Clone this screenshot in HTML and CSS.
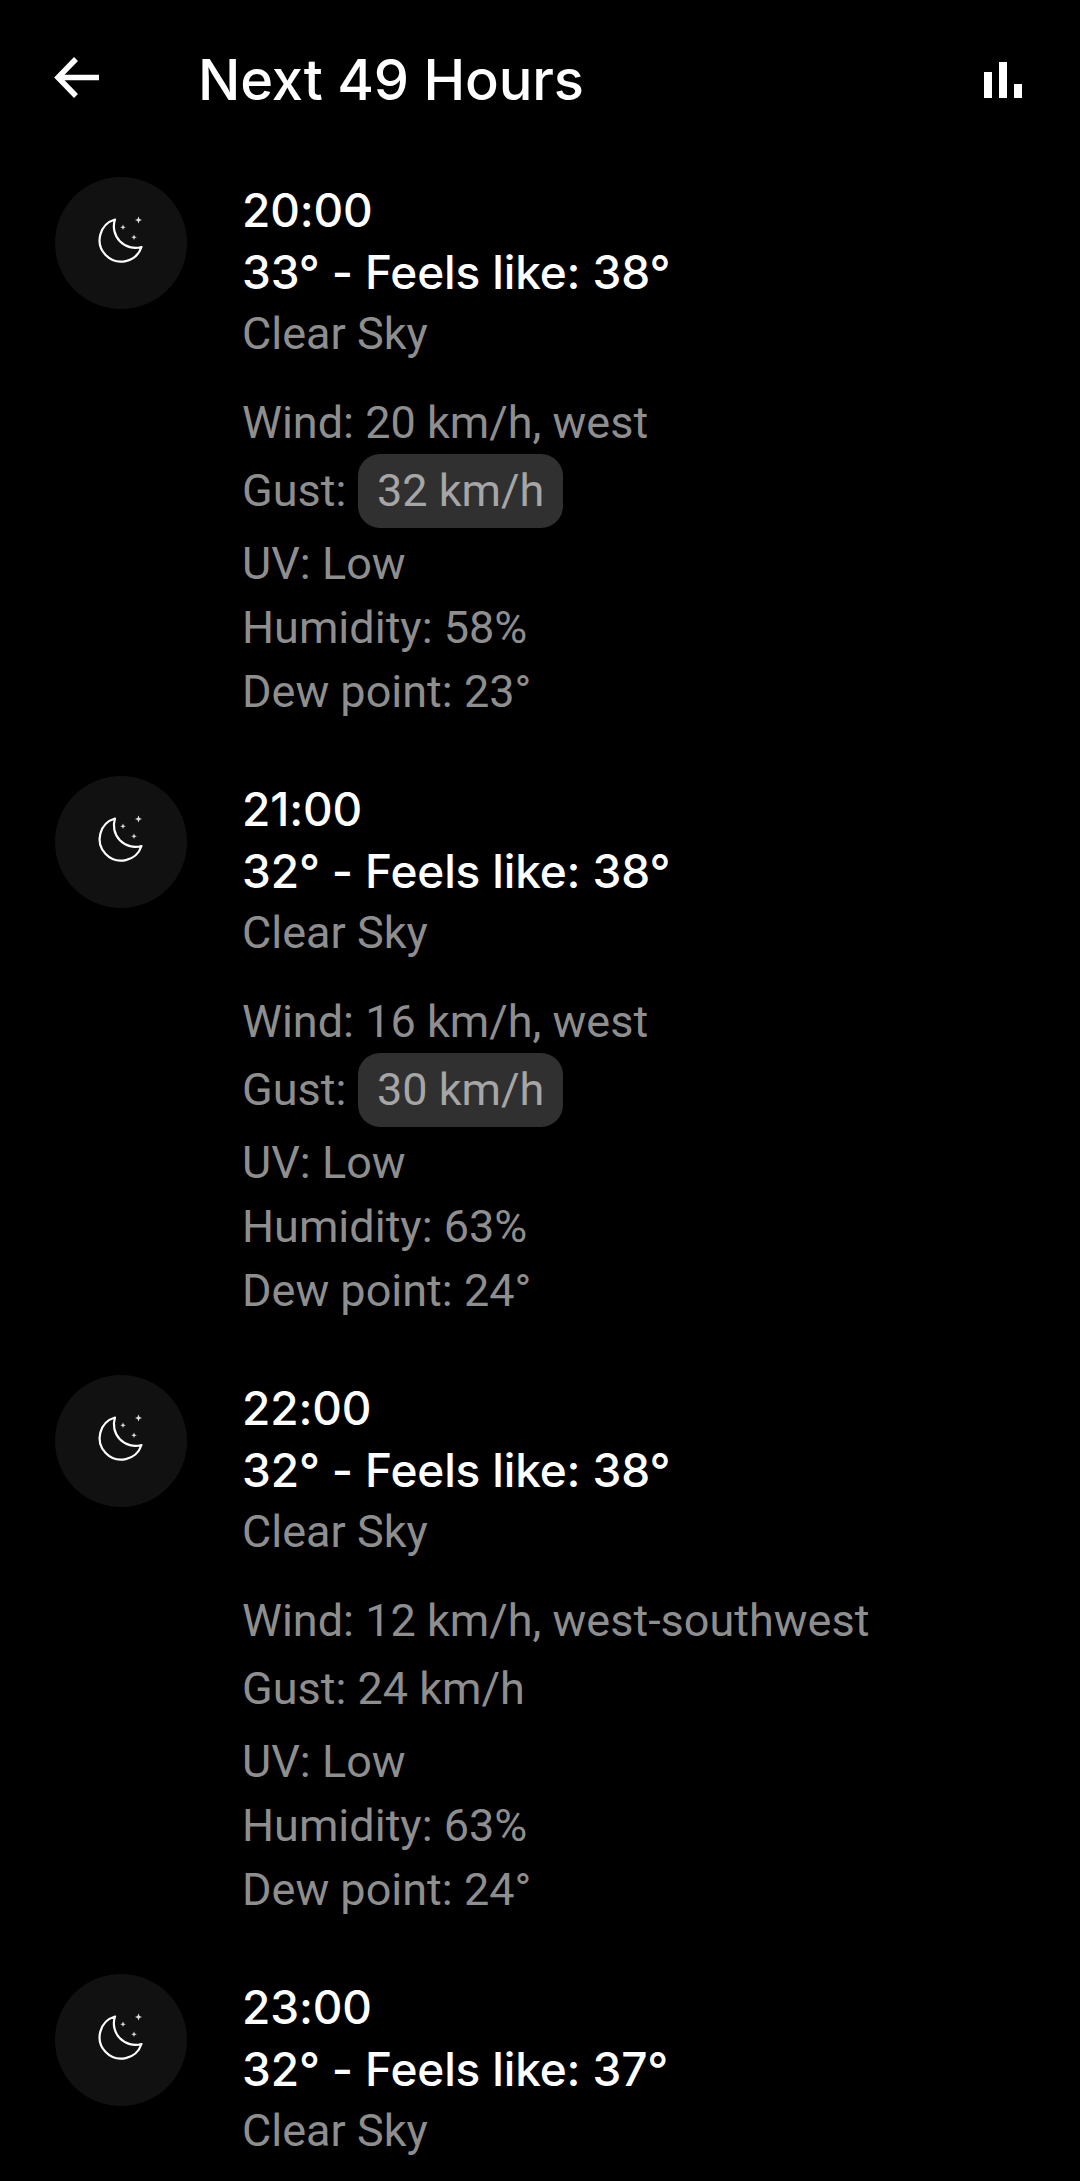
FILE: index.html
```html
<!DOCTYPE html>
<html lang="en">
<head>
    <meta charset="UTF-8">
    <meta name="viewport" content="width=device-width, initial-scale=1.0">
    <title>Next 49 Hours</title>
    <link rel="stylesheet" href="styles.css">
</head>
<body>
    <!-- Top bar -->
    <header class="top-bar">
        <svg class="back-icon" viewBox="0 0 56 52" aria-hidden="true">
            <path d="M49 23.500H9M26 5 8 23.500 26 42"/>
        </svg>
        <h1 class="title">Next 49 Hours</h1>
        <svg class="chart-icon" viewBox="0 0 38 36" aria-hidden="true">
            <rect x="0" y="10" width="8" height="26"/>
            <rect x="15" y="0" width="8" height="36"/>
            <rect x="30" y="22" width="8" height="14"/>
        </svg>
    </header>

    <!-- Hourly list -->
    <main class="hours">
        <section class="hour">
            <div class="hour-icon">
                <svg class="moon" viewBox="0 0 66 66" aria-hidden="true">
                    <path class="moon-line" d="M27 9.500A21.500 21.500 0 1 0 53.500 37 21.500 21.500 0 0 1 27 9.500Z"/>
                    <path class="moon-star" d="M50.500 6.500l1 2.500 2.500 1-2.500 1-1 2.500-1-2.500-2.500-1 2.500-1zM35 14.500l.8 2 2 .8-2 .8-.8 2-.8-2-2-.8 2-.8zM46 24.500l.8 2 2 .8-2 .8-.8 2-.8-2-2-.8 2-.8z"/>
                </svg>
            </div>
            <div class="hour-text">
                <p class="time">20:00</p>
                <p class="temp">33° - Feels like: 38°</p>
                <p class="desc">Clear Sky</p>
                <ul class="details">
                    <li>Wind: 20 km/h, west</li>
                    <li class="gust">Gust: <span class="chip">32 km/h</span></li>
                    <li>UV: Low</li>
                    <li>Humidity: 58%</li>
                    <li>Dew point: 23°</li>
                </ul>
            </div>
        </section>

        <section class="hour">
            <div class="hour-icon">
                <svg class="moon" viewBox="0 0 66 66" aria-hidden="true">
                    <path class="moon-line" d="M27 9.500A21.500 21.500 0 1 0 53.500 37 21.500 21.500 0 0 1 27 9.500Z"/>
                    <path class="moon-star" d="M50.500 6.500l1 2.500 2.500 1-2.500 1-1 2.500-1-2.500-2.500-1 2.500-1zM35 14.500l.8 2 2 .8-2 .8-.8 2-.8-2-2-.8 2-.8zM46 24.500l.8 2 2 .8-2 .8-.8 2-.8-2-2-.8 2-.8z"/>
                </svg>
            </div>
            <div class="hour-text">
                <p class="time">21:00</p>
                <p class="temp">32° - Feels like: 38°</p>
                <p class="desc">Clear Sky</p>
                <ul class="details">
                    <li>Wind: 16 km/h, west</li>
                    <li class="gust">Gust: <span class="chip">30 km/h</span></li>
                    <li>UV: Low</li>
                    <li>Humidity: 63%</li>
                    <li>Dew point: 24°</li>
                </ul>
            </div>
        </section>

        <section class="hour">
            <div class="hour-icon">
                <svg class="moon" viewBox="0 0 66 66" aria-hidden="true">
                    <path class="moon-line" d="M27 9.500A21.500 21.500 0 1 0 53.500 37 21.500 21.500 0 0 1 27 9.500Z"/>
                    <path class="moon-star" d="M50.500 6.500l1 2.500 2.500 1-2.500 1-1 2.500-1-2.500-2.500-1 2.500-1zM35 14.500l.8 2 2 .8-2 .8-.8 2-.8-2-2-.8 2-.8zM46 24.500l.8 2 2 .8-2 .8-.8 2-.8-2-2-.8 2-.8z"/>
                </svg>
            </div>
            <div class="hour-text">
                <p class="time">22:00</p>
                <p class="temp">32° - Feels like: 38°</p>
                <p class="desc">Clear Sky</p>
                <ul class="details">
                    <li>Wind: 12 km/h, west-southwest</li>
                    <li class="gust">Gust: 24 km/h</li>
                    <li>UV: Low</li>
                    <li>Humidity: 63%</li>
                    <li>Dew point: 24°</li>
                </ul>
            </div>
        </section>

        <section class="hour">
            <div class="hour-icon">
                <svg class="moon" viewBox="0 0 66 66" aria-hidden="true">
                    <path class="moon-line" d="M27 9.500A21.500 21.500 0 1 0 53.500 37 21.500 21.500 0 0 1 27 9.500Z"/>
                    <path class="moon-star" d="M50.500 6.500l1 2.500 2.500 1-2.500 1-1 2.500-1-2.500-2.500-1 2.500-1zM35 14.500l.8 2 2 .8-2 .8-.8 2-.8-2-2-.8 2-.8zM46 24.500l.8 2 2 .8-2 .8-.8 2-.8-2-2-.8 2-.8z"/>
                </svg>
            </div>
            <div class="hour-text">
                <p class="time">23:00</p>
                <p class="temp">32° - Feels like: 37°</p>
                <p class="desc">Clear Sky</p>
            </div>
        </section>
    </main>
</body>
</html>
```

FILE: styles.css
```css
/* Basic reset */
* {
    margin: 0;
    padding: 0;
    box-sizing: border-box;
}

html, body {
    height: 2181px;
    overflow: hidden;
    background-color: #000;
}

body {
    font-family: Roboto, "Liberation Sans", sans-serif;
    color: #fff;
}

/* Top bar */
.top-bar {
    display: flex;
    align-items: center;
    height: 160px;
    padding: 0 58px 0 50px;
}

.back-icon {
    width: 56px;
    height: 52px;
    flex: none;
    fill: none;
    stroke: #fff;
    stroke-width: 5.5;
}

.title {
    flex: 1;
    margin-left: 92px;
    font-family: Inter, Roboto, sans-serif;
    font-size: 56px;
    font-weight: 450;
    letter-spacing: -0.2px;
    font-feature-settings: "calt" 0;
}

.chart-icon {
    width: 38px;
    height: 36px;
    flex: none;
    fill: #fff;
}

/* Hourly list */
.hours {
    padding-top: 17px;
}

.hour {
    display: flex;
    height: 599px;
    padding-left: 55px;
}

.hour:last-child {
    height: auto;
}

.hour-icon {
    display: flex;
    justify-content: center;
    align-items: center;
    width: 132px;
    height: 132px;
    flex: none;
    border-radius: 50%;
    background-color: #111;
}

.moon {
    width: 66px;
    height: 66px;
}

.moon-line {
    fill: none;
    stroke: #fff;
    stroke-width: 2.2;
    stroke-linejoin: round;
}

.moon-star {
    fill: #ddd;
}

.hour-text {
    margin-left: 55px;
    padding-top: 2px;
}

.time, .temp {
    font-family: Inter, Roboto, sans-serif;
    font-size: 46px;
    font-weight: 450;
    line-height: 62px;
    letter-spacing: -0.15px;
    font-feature-settings: "calt" 0;
}

.desc {
    font-size: 45px;
    line-height: 61px;
    color: #8e8e8e;
}

.details {
    margin-top: 27px;
    list-style-type: none;
    font-size: 45px;
    line-height: 64px;
    color: #8e8e8e;
}

.gust {
    height: 74px;
    margin-top: -1px;
    margin-bottom: 4px;
    line-height: 74px;
}

.chip {
    display: inline-block;
    height: 74px;
    margin-left: 1px;
    padding: 0 18.5px;
    border-radius: 22px;
    background-color: #303030;
    color: #a6a6a6;
}
```
